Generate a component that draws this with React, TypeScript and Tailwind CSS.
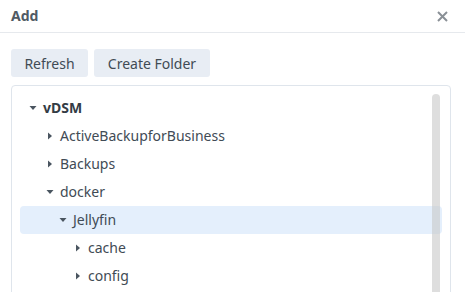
import React from "react";

const Down = () => (
  <svg width="8" height="8" viewBox="0 0 8 8" className="block">
    <path d="M0.5 2 L7.5 2 L4 6 Z" fill="#4a5560" />
  </svg>
);
const Right = () => (
  <svg width="8" height="8" viewBox="0 0 8 8" className="block">
    <path d="M2 0.5 L6 4 L2 7.5 Z" fill="#4a5560" />
  </svg>
);

type Row = { label: string; level: number; open: boolean; bold?: boolean; sel?: boolean };

const rows: Row[] = [
  { label: "vDSM", level: 0, open: true, bold: true },
  { label: "ActiveBackupforBusiness", level: 1, open: false },
  { label: "Backups", level: 1, open: false },
  { label: "docker", level: 1, open: true },
  { label: "Jellyfin", level: 2, open: true, sel: true },
  { label: "cache", level: 3, open: false },
  { label: "config", level: 3, open: false },
];

const pads = ["pl-[9px]", "pl-[26px]", "pl-[39px]", "pl-[54px]"];

export default function App() {
  return (
    <div
      className="w-[465px] h-[292px] overflow-hidden bg-white text-[#414b55]"
      style={{ fontFamily: '"Noto Sans", "Open Sans", sans-serif' }}
    >
      <div className="h-[33px] flex items-center justify-between pl-[11px] pr-[17px] border-b border-[#e6e9ed]">
        <span className="text-[14px] font-bold text-[#505a64] leading-none">Add</span>
        <svg width="11" height="11" viewBox="0 0 11 11">
          <path d="M1 1 L10 10 M10 1 L1 10" stroke="#8a9096" strokeWidth="2" />
        </svg>
      </div>
      <div className="pl-[11px] pr-[14px] pt-[16px]">
        <div className="flex gap-[6px]">
          <button className="h-[28px] w-[77px] rounded-[3px] bg-[#e8edf4] text-[14px] text-[#414b55]">
            Refresh
          </button>
          <button className="h-[28px] w-[116px] rounded-[3px] bg-[#e8edf4] text-[14px] text-[#414b55]">
            Create Folder
          </button>
        </div>
        <div className="relative mt-[8px] h-[300px] border border-[#dfe5ec] rounded-[4px] px-[8px] pt-[8px]">
          <div className="flex flex-col">
            {rows.map((r) => (
              <div
                key={r.label}
                className={`h-[28px] flex items-center rounded-[4px] ${pads[r.level]} ${r.sel ? "bg-[#e4effc]" : ""}`}
              >
                <span className="w-[8px] flex justify-center">{r.open ? <Down /> : <Right />}</span>
                <span className={`ml-[6px] text-[14px] leading-[28px] ${r.bold ? "font-bold text-[#333c45]" : ""}`}>
                  {r.label}
                </span>
              </div>
            ))}
          </div>
          <div className="absolute right-[10px] top-[8px] bottom-0 w-[8px] rounded-full bg-[#c8c8c8]/60" />
        </div>
      </div>
    </div>
  );
}
